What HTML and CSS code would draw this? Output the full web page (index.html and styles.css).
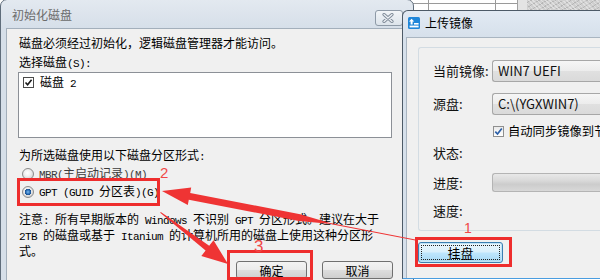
FILE: index.html
```html
<!DOCTYPE html>
<html lang="zh-CN">
<head>
<meta charset="utf-8">
<title>初始化磁盘</title>
<link rel="stylesheet" href="styles.css">
</head>
<body>
<div class="desk">
  <div class="strip">
    <div class="grid"></div>
    <div class="band"></div>
    <div class="tex"></div>
  </div>

  <div class="win wl">
    <div class="tbar">
      <span class="ttl">初始化磁盘</span>
      <span class="close"><svg width="12" height="10" viewBox="0 0 12 10"><path d="M2 1.5 L10 8.5 M10 1.5 L2 8.5" stroke="#7f8b98" stroke-width="3.2" stroke-linecap="round"/><path d="M2 1.5 L10 8.5 M10 1.5 L2 8.5" stroke="#eef2f6" stroke-width="1.3" stroke-linecap="round"/></svg></span>
    </div>
    <div class="pane">
      <p class="ln">磁盘必须经过初始化，逻辑磁盘管理器才能访问。</p>
      <p class="ln l2">选择磁盘<span class="m">(S):</span></p>
      <div class="list">
        <div class="item">
          <span class="cb"><svg width="9" height="9" viewBox="0 0 9 9"><path d="M1.5 4.5 L3.6 6.8 L7.6 1.8" fill="none" stroke="#1a1a1a" stroke-width="1.6"/></svg></span>
          <span>磁盘<span class="m"> 2</span></span>
        </div>
      </div>
      <p class="ln l3">为所选磁盘使用以下磁盘分区形式<span class="m">:</span></p>
      <div class="opt mbr"><span class="rd"></span><span class="dim"><span class="m">MBR(</span>主启动记录<span class="m">)(M)</span></span></div>
      <div class="opt gpt"><span class="rd on"></span><span><span class="m">GPT (GUID </span>分区表<span class="m">)(G)</span></span></div>
      <p class="note">注意<span class="m">: </span>所有早期版本的<span class="m"> Windows </span>不识别<span class="m"> GPT </span>分区形式。建议在大于<br><span class="m">2TB </span>的磁盘或基于<span class="m"> Itanium </span>的计算机所用的磁盘上使用这种分区形<br>式。</p>
      <div class="btns"><span class="btn ok">确定</span><span class="btn cancel">取消</span></div>
    </div>
  </div>

  <div class="win wr">
    <div class="rbar">
      <span class="ico"><svg width="12" height="12" viewBox="0 0 12 12"><rect x="0" y="0" width="12" height="12" rx="1.5" fill="#1f86d9"/><path d="M3.6 1.8 L6.2 4.6 H4.6 V7.6 H2.6 V4.6 H1 Z" fill="#fff"/><rect x="1.6" y="8.6" width="9" height="1.8" fill="#fff"/><rect x="6" y="6" width="4.6" height="1.6" fill="#fff"/></svg></span>
      <span class="rttl">上传镜像</span>
    </div>
    <div class="rpane">
      <div class="group">
        <div class="row r1"><span class="lab">当前镜像:</span><span class="combo">WIN7 UEFI</span></div>
        <div class="row r2"><span class="lab">源盘:</span><span class="combo">C:\(YGXWIN7)</span></div>
        <div class="row r3"><span class="chk"><svg width="9" height="9" viewBox="0 0 9 9"><path d="M1.3 4.6 L3.5 7 L7.8 1.5" fill="none" stroke="#2b5fa8" stroke-width="1.7"/></svg></span><span class="chktxt">自动同步镜像到节点</span></div>
        <div class="row r4"><span class="lab">状态:</span></div>
        <div class="row r5"><span class="lab">进度:</span><span class="bar"></span></div>
        <div class="row r6"><span class="lab">速度:</span></div>
      </div>
      <span class="btn mount">挂盘</span>
    </div>
  </div>

  <svg class="marks" width="600" height="280" viewBox="0 0 600 280">
    <rect x="18.5" y="179.5" width="140" height="25" fill="none" stroke="#ee2d2d" stroke-width="3"/>
    <rect x="416.5" y="238.5" width="94" height="27" fill="none" stroke="#ee2d2d" stroke-width="3"/>
    <rect x="228.5" y="251.5" width="83" height="27" fill="none" stroke="#ee2d2d" stroke-width="3"/>
    <polygon fill="#ef3434" points="162,191 191.2,187.5 190.2,192.9 300.2,214.2 329,222.8 415.3,239.6 415.3,240.6 328.8,223.8 298.8,221 188.8,199.7 187.8,205.1"/>
    <polygon fill="#ef3434" points="228,264 213.5,240.3 209.2,245.8 160.8,212 160.2,212.8 205.6,250.6 201.3,256.1"/>
    <text x="160" y="178" class="num n2">2</text>
    <text x="464" y="233" class="num n1">1</text>
    <text x="254" y="252" class="num n3">3</text>
  </svg>
</div>
</body>
</html>
```

FILE: styles.css
```css
* { box-sizing: border-box; margin: 0; padding: 0; }
html, body { width: 600px; height: 280px; overflow: hidden; }
body { background: #ffffff; font-family: "Noto Sans CJK SC", "Noto Sans", sans-serif; color: #000; }

.desk { position: relative; width: 600px; height: 280px; overflow: hidden; }

/* desktop strip behind the windows */
.strip { position: absolute; left: 413px; top: 0; width: 187px; height: 12px; display: flex; }
.strip .grid {
  width: 104px; height: 100%;
  background:
    linear-gradient(#9a9a9a, #9a9a9a) 15px 0 / 1px 100% no-repeat,
    linear-gradient(#9a9a9a, #9a9a9a) 82px 0 / 1px 100% no-repeat,
    linear-gradient(#9a9a9a, #9a9a9a) 0 3px / 100% 1px no-repeat,
    #ffffff;
}
.strip .band { width: 10px; height: 100%; background: #e4e4e4; border-left: 1px solid #a0a0a0; }
.strip .tex {
  flex: 1; height: 100%;
  background:
    repeating-linear-gradient(45deg, rgba(255,255,255,0.35) 0 1px, transparent 1px 3px),
    repeating-linear-gradient(-30deg, rgba(0,0,0,0.12) 0 1px, transparent 1px 4px),
    #cfcfcf;
}

/* left dialog */
.wl {
  position: absolute; left: 0; top: -1px; width: 414px; height: 292px;
  border: 1px solid #5f6d7b; border-radius: 7px 7px 0 0;
  background: linear-gradient(#e3e9f0, #d6dfe9 28px, #d6dfe9);
  display: flex; flex-direction: column;
}
.wl .tbar { height: 28px; display: flex; align-items: flex-start; padding-left: 11px; flex: none; }
.wl .ttl { font-size: 12px; line-height: 14px; margin-top: 8px; color: #6b6b6b; }
.close {
  margin-left: auto; margin-right: 10px; margin-top: 10px;
  width: 28px; height: 16px;
  border: 1px solid #8e9aa7; border-radius: 3px;
  background: linear-gradient(#f2f5f8, #dde4eb);
  display: flex; align-items: center; padding-left: 6px;
}
.close svg { display: block; }

.pane {
  flex: 1; margin-left: 5px;
  background: #f0f0f0;
  border-left: 1px solid #a3afbb; border-top: 1px solid #a3afbb;
  padding: 7px 0 0 12px;
  font-size: 12px;
}
.m { font-family: "Liberation Mono", monospace; font-size: 11px; letter-spacing: -0.6px; }
.ln { line-height: 14px; height: 14px; white-space: nowrap; }
.l2 { margin-top: 5px; }
.list {
  margin-top: 3px; margin-left: -1px;
  width: 374px; height: 66px;
  background: #ffffff; border: 1px solid #8c9097;
  padding: 4px 0 0 4px;
}
.item { display: flex; align-items: center; gap: 6px; height: 11px; line-height: 12px; }
.cb {
  width: 11px; height: 11px; border: 1px solid #4a4a4a; background: #fff;
  display: flex; align-items: center; justify-content: center; flex: none;
}
.cb svg { display: block; }
.l3 { margin-top: 10px; }
.opt { display: flex; align-items: center; gap: 5px; height: 14px; line-height: 14px; white-space: nowrap; }
.mbr { margin-top: 5px; }
.gpt { margin-top: 4px; }
.dim { color: #3c3c3c; }
.rd {
  width: 12px; height: 12px; margin-left: 3px; flex: none;
  border-radius: 50%; border: 1px solid #8b8b8b;
  background: radial-gradient(circle at 45% 40%, #ffffff 0, #f1f1f1 3px, #d6d6d6 6px);
}
.rd.on {
  background:
    radial-gradient(circle at 50% 50%, #7fbcef 0, #2a6fb8 2px, #1a4f8f 3px, transparent 3.4px),
    radial-gradient(circle at 45% 40%, #ffffff 0, #eeeeee 3px, #d4d4d4 6px);
}
.note { margin-top: 13px; line-height: 13px; white-space: nowrap; }
.btns { display: flex; gap: 15px; margin-top: 4px; margin-left: 217px; }

.btn {
  display: flex; align-items: center; justify-content: center;
  border: 1px solid #707070; border-radius: 3px;
  background: linear-gradient(#f3f3f3, #ebebeb 48%, #dddddd 52%, #cfcfcf);
  white-space: nowrap;
}
.btn.ok, .btn.cancel { width: 71px; height: 18px; font-size: 12px; }

/* right dialog */
.wr {
  position: absolute; left: 402px; top: 10px; width: 220px; height: 269px;
  border: 1px solid #4d5a67; border-bottom: 1px solid #4a9de0;
  border-radius: 6px 6px 0 0;
  background: linear-gradient(#e2eaf3, #d6e0eb 26px, #d6e0eb);
  padding-left: 3px;
  display: flex; flex-direction: column;
}
.rbar { height: 26px; flex: none; display: flex; align-items: flex-start; }
.ico { margin-left: 2px; margin-top: 6px; display: block; }
.ico svg { display: block; }
.rttl { margin-left: 5px; margin-top: 5px; font-size: 12px; line-height: 14px; }
.rpane {
  flex: 1; background: #f0f0f0;
  border-left: 1px solid #a9b5c1; border-top: 1px solid #a9b5c1;
  font-size: 13px; padding-left: 11px; padding-top: 9px;
  display: flex; flex-direction: column; align-items: flex-start;
}
.group {
  width: 200px; height: 184px;
  border: 1px solid #d3dce3; border-right: none; border-radius: 3px 0 0 3px;
  padding: 12px 0 0 14px;
}
.row { display: flex; align-items: center; white-space: nowrap; line-height: 18px; }
.lab { width: 59px; flex: none; color: #111; }
.r1, .r2 { height: 22px; }
.r2 { margin-top: 11px; }
.r3 { margin-top: 10px; height: 12px; padding-left: 60px; gap: 4px; }
.chktxt { font-size: 12.3px; }
.r4 { margin-top: 6px; height: 20px; }
.r5 { margin-top: 10px; height: 19px; }
.r6 { margin-top: 9px; height: 20px; }
.combo {
  flex: 1; height: 22px; padding-left: 5px;
  border: 1px solid #a7a7a7; border-right: none; border-radius: 3px 0 0 3px;
  background: linear-gradient(#f6f6f6, #ececec 50%, #e0e0e0 52%, #dadada);
  display: flex; align-items: center; color: #111;
}
.chk {
  width: 11px; height: 11px; border: 1px solid #8f8f8f; background: linear-gradient(#eaeaea, #ffffff);
  display: flex; align-items: center; justify-content: center; flex: none;
}
.chk svg { display: block; }
.bar {
  flex: 1; height: 19px;
  border: 1px solid #b4b4b4; border-right: none; border-radius: 3px 0 0 3px;
  background: linear-gradient(#e8e8e8, #d9d9d9 40%, #cccccc 60%, #d8d8d8);
}
.btn.mount {
  margin-top: 11px; width: 85px; height: 21px; font-size: 13px;
  border-color: #3c7fb1;
  box-shadow: inset 0 0 0 1px #bfe3f7;
  background: linear-gradient(#eaf6fd, #d9f0fc 48%, #bee6fd 52%, #a7d9f5);
  outline: 1px dotted #222; outline-offset: -4px;
}

/* annotations */
.marks { position: absolute; left: 0; top: 0; pointer-events: none; }
.num { font-family: "Liberation Sans", sans-serif; fill: #f04848; }
.n2 { font-size: 15px; }
.n1 { font-size: 14px; }
.n3 { font-size: 17px; }
```
